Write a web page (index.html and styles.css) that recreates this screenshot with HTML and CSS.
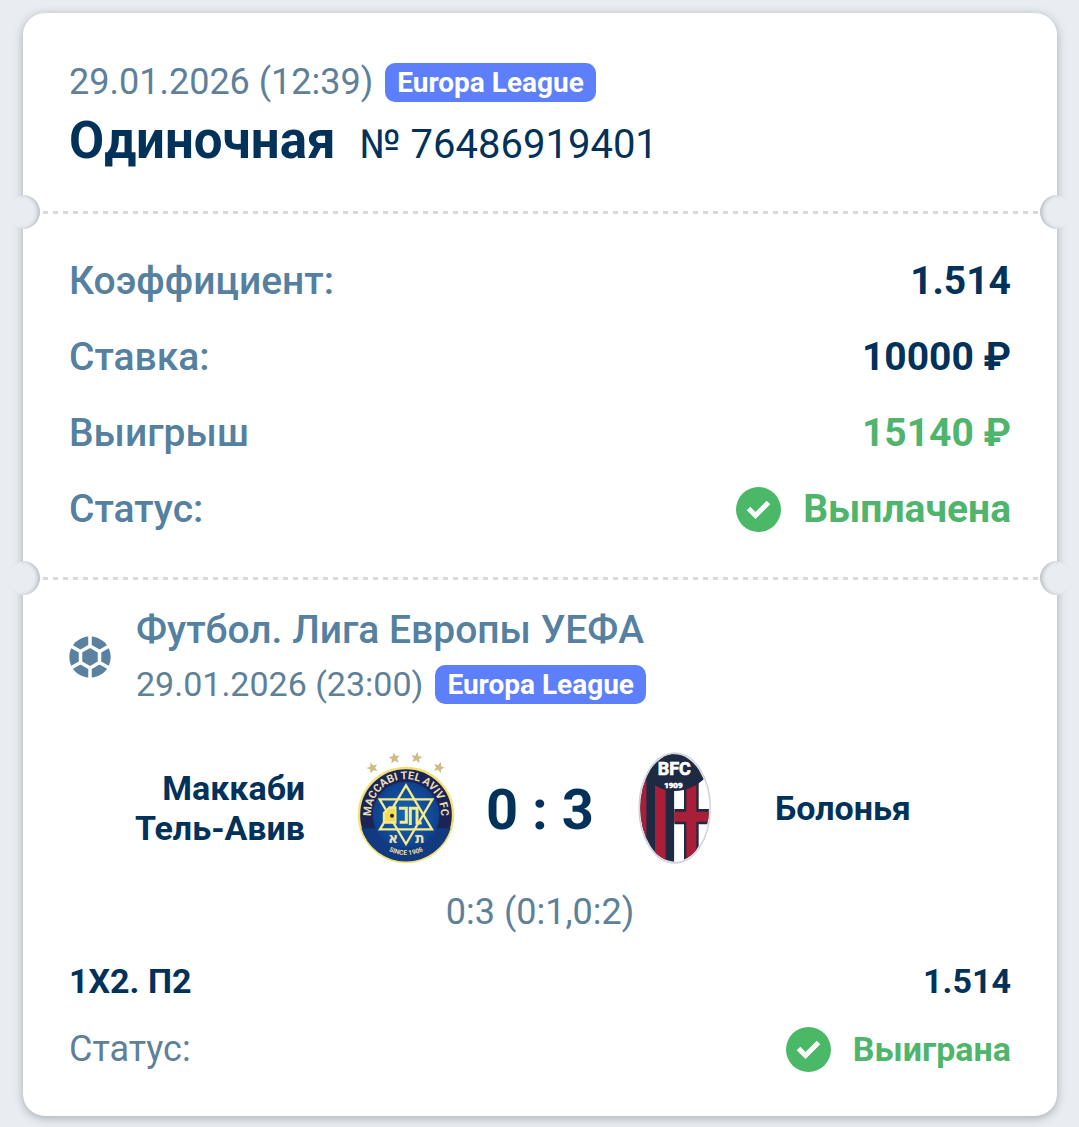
FILE: index.html
```html
<!DOCTYPE html>
<html lang="ru">
<head>
    <meta charset="UTF-8">
    <meta name="viewport" content="width=device-width, initial-scale=1">
    <title>Одиночная № 76486919401</title>
    <link rel="stylesheet" href="styles.css">
</head>
<body>

<main class="ticket">
    <header class="head">
        <div class="date-line">
            <time>29.01.2026 (12:39)</time>
            <span class="badge">Europa League</span>
        </div>
        <div class="title-line">
            <h1>Одиночная</h1>
            <span class="number">№ 76486919401</span>
        </div>
    </header>

    <dl class="summary tear">
        <div class="row">
            <dt>Коэффициент:</dt>
            <dd>1.514</dd>
        </div>
        <div class="row">
            <dt>Ставка:</dt>
            <dd>10000 ₽</dd>
        </div>
        <div class="row">
            <dt>Выигрыш</dt>
            <dd class="green">15140 ₽</dd>
        </div>
        <div class="row">
            <dt>Статус:</dt>
            <dd class="green">
                <svg class="check" viewBox="0 0 45 45" aria-hidden="true">
                    <circle cx="22.500" cy="22.500" r="22.500" fill="#4ab866"/>
                    <path d="M12.500 21.500 L19.500 28.500 L32.500 15.500" fill="none" stroke="#fff" stroke-width="5"/>
                </svg>
                Выплачена
            </dd>
        </div>
    </dl>

    <section class="event tear">
        <div class="event-head">
            <svg class="ball" viewBox="0 0 42 42" aria-hidden="true">
                <circle cx="21" cy="21" r="20.700" fill="#5a82a0"/>
                <path d="M21 10 L30.500 15.500 V26.500 L21 32 L11.500 26.500 V15.500 Z M21 10 V0 M30.500 15.500 L41 9.500 M30.500 26.500 L41 32.500 M21 32 V42 M11.500 26.500 L1 32.500 M11.500 15.500 L1 9.500" fill="none" stroke="#fff" stroke-width="3.500"/>
            </svg>
            <div>
                <h2>Футбол. Лига Европы УЕФА</h2>
                <div class="date-line">
                    <time>29.01.2026 (23:00)</time>
                    <span class="badge">Europa League</span>
                </div>
            </div>
        </div>

        <div class="match">
            <span class="team home">Маккаби Тель-Авив</span>
            <svg class="crest" viewBox="3 21 336 336" role="img" aria-label="Maccabi Tel Aviv FC">
                <defs>
                    <radialGradient id="blue">
                        <stop offset="0" stop-color="#1468b4"/>
                        <stop offset="1" stop-color="#10408c"/>
                    </radialGradient>
                    <path id="star" d="M0 -17 L5 -5 L17 -5 L8 3 L11 15 L0 8 L-11 15 L-8 3 L-17 -5 L-5 -5 Z"/>
                    <path id="arcTop" d="M67 222 A105 105 0 1 1 275 222"/>
                    <path id="arcBottom" d="M92 300 A119 119 0 0 0 250 300"/>
                </defs>
                <g fill="#cdbd84">
                    <use href="#star" transform="translate(70 68) rotate(-20)"/>
                    <use href="#star" transform="translate(136 39) rotate(-8)"/>
                    <use href="#star" transform="translate(203 38) rotate(8)"/>
                    <use href="#star" transform="translate(270 67) rotate(20)"/>
                </g>
                <circle cx="171" cy="210" r="141" fill="#1c2356" stroke="#f3e06e" stroke-width="7"/>
                <path d="M37 250 A140 140 0 0 0 305 250 Z" fill="#123a80"/>
                <circle cx="171" cy="210" r="100" fill="url(#blue)"/>
                <text class="ring-text" font-size="33"><textPath href="#arcTop" startOffset="50%" text-anchor="middle">MACCABI TEL AVIV FC</textPath></text>
                <text class="ring-text" font-size="20"><textPath href="#arcBottom" startOffset="50%" text-anchor="middle">SINCE 1906</textPath></text>
                <g fill="none" stroke="#f6ea8c" stroke-width="7">
                    <path d="M171 121 L249 253 H93 Z"/>
                    <path d="M92 163 H250 L171 297 Z"/>
                    <path stroke-width="9" d="M106 232 V204 L122 188 H138 V232 H106 M150 190 H172 V232 H152 M184 240 V190 H204 V234 H218"/>
                </g>
                <path d="M108 206 L124 192 H138 V228 H108 Z" fill="#f6dc4c"/>
                <circle cx="129" cy="212" r="6" fill="#1c2356"/>
                <text class="letters" x="132" y="293">א</text>
                <text class="letters" x="212" y="293">ת</text>
            </svg>
            <strong class="score">0 : 3</strong>
            <svg class="crest" viewBox="-21 21 336 336" role="img" aria-label="Bologna FC 1909">
                <defs>
                    <clipPath id="oval"><ellipse cx="149" cy="189" rx="103" ry="161"/></clipPath>
                </defs>
                <ellipse cx="149" cy="189" rx="107" ry="165" fill="#f3f4f7" stroke="#cfd2da" stroke-width="4"/>
                <g clip-path="url(#oval)">
                    <path d="M40 20 H148 V360 H40 Z" fill="#1e2a42"/>
                    <path d="M40 90 H64 V360 H40 Z M90 110 H122 V360 H90 Z" fill="#a91f37"/>
                    <path d="M148 90 H260 V360 H148 Z" fill="#fff"/>
                    <path d="M177 110 H221 V360 H177 Z M148 192 H260 V238 H148 Z" fill="#1e2a42"/>
                    <path d="M184 110 H214 V360 H184 Z M148 200 H260 V230 H148 Z" fill="#a91f37"/>
                    <path d="M40 20 H260 V80 Q208 138 149 138 Q90 138 56 84 Z" fill="#1e2a42"/>
                </g>
                <text class="bfc" x="148" y="91" font-size="54">BFC</text>
                <text class="bfc" x="145" y="129" font-size="24">1909</text>
            </svg>
            <span class="team">Болонья</span>
        </div>

        <p class="periods">0:3 (0:1,0:2)</p>

        <div class="bet">
            <span>1X2. П2</span>
            <span>1.514</span>
        </div>
        <div class="bet-status">
            <span>Статус:</span>
            <span class="result green">
                <svg class="check" viewBox="0 0 45 45" aria-hidden="true">
                    <circle cx="22.500" cy="22.500" r="22.500" fill="#4ab866"/>
                    <path d="M12.500 21.500 L19.500 28.500 L32.500 15.500" fill="none" stroke="#fff" stroke-width="5"/>
                </svg>
                Выиграна
            </span>
        </div>
    </section>
</main>

</body>
</html>
```
FILE: styles.css
```css
* {
    box-sizing: border-box;
}
body {
    margin: 0;
    padding: 13px 22px 11px 23px;
    background-color: #e9edf2;
    font-family: Roboto, sans-serif;
    color: #02315a;
}
h1, h2, p, dl, dd {
    margin: 0;
}
.ticket {
    background-color: white;
    border-radius: 22px;
    box-shadow: 0 2px 10px rgba(60, 70, 80, 0.4);
}
.head {
    padding: 46px 46px 37px;
}
.date-line {
    display: flex;
    align-items: center;
    gap: 12px;
    font-size: 36px;
    line-height: 46px;
    color: #5e8099;
}
.badge {
    padding: 0 12px;
    border-radius: 10px;
    background-color: #5d7ffb;
    color: white;
    font-size: 28px;
    font-weight: 700;
    line-height: 39px;
}
.title-line {
    display: flex;
    align-items: baseline;
    gap: 24px;
    margin-top: 3px;
    line-height: 66px;
}
h1 {
    font-size: 51px;
    font-weight: 700;
}
.number {
    font-size: 40px;
    line-height: 50px;
}

/* perforated line with a notch at each edge */
.tear {
    position: relative;
}
.tear::before, .tear::after {
    content: "";
    position: absolute;
    top: -16px;
    width: 34px;
    height: 34px;
    border-radius: 50%;
    background-color: #e9edf2;
}
.tear::before {
    left: -17px;
    box-shadow: inset -3px 0 4px -1px #b4bac2;
}
.tear::after {
    right: -17px;
    box-shadow: inset 3px 0 4px -1px #b4bac2;
}
.summary, .event {
    background: repeating-linear-gradient(90deg, #d9d9dd 0 5px, transparent 5px 10px) top / 100% 3px no-repeat;
}
.summary {
    padding: 32px 46px 30px;
}
.row, .bet, .bet-status {
    display: flex;
    justify-content: space-between;
    align-items: center;
}
.row {
    font-size: 39px;
    line-height: 76px;
    font-weight: 700;
}
.row dt {
    font-weight: 500;
    color: #5580a0;
}
.row dd, .result {
    display: flex;
    align-items: center;
    gap: 22px;
}
.green {
    color: #4fb56c;
}
.check {
    width: 45px;
    height: 45px;
}

.event {
    padding: 26px 46px 32px;
}
.event-head {
    display: flex;
    align-items: center;
    gap: 25px;
}
.ball {
    width: 42px;
    height: 42px;
}
h2 {
    font-size: 39px;
    font-weight: 500;
    line-height: 54px;
    color: #5580a0;
}
.event-head .date-line {
    font-size: 34px;
    line-height: 54px;
}
.event-head .badge {
    line-height: 39px;
}
.match {
    display: grid;
    grid-template-columns: 1fr 112px auto 112px 1fr;
    align-items: center;
    column-gap: 24px;
    margin-top: 41px;
}
.crest {
    width: 112px;
    height: 112px;
}
.team {
    padding-left: 21px;
    font-size: 34px;
    font-weight: 700;
    line-height: 40px;
}
.home {
    padding: 0 21px 0 0;
    text-align: right;
}
.score {
    padding-top: 4px;
    font-size: 56px;
    line-height: 66px;
}
.ring-text, .letters, .bfc {
    font-family: Roboto, sans-serif;
    font-weight: 700;
    fill: #e8dfae;
}
.letters {
    font-family: "DejaVu Sans", sans-serif;
    font-size: 42px;
    text-anchor: middle;
}
.bfc {
    fill: white;
    stroke: white;
    stroke-width: 2;
    text-anchor: middle;
}
.periods {
    margin-top: 25px;
    font-size: 36px;
    line-height: 46px;
    text-align: center;
    color: #5e8099;
}
.bet {
    margin-top: 12px;
    font-size: 34px;
    font-weight: 700;
    line-height: 68px;
}
.bet-status {
    font-size: 36px;
    line-height: 69px;
    color: #5e8099;
}
.result {
    font-size: 34px;
    font-weight: 700;
}
.result.green {
    color: #4fb56c;
}
```
